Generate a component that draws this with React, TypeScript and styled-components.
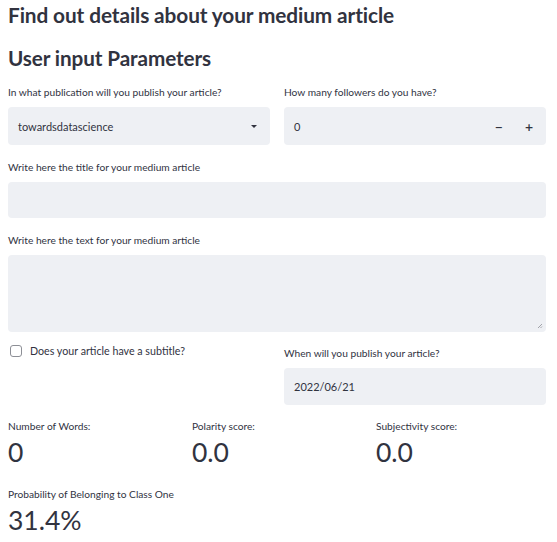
import React from 'react';
import styled, { createGlobalStyle } from 'styled-components';

const GlobalStyle = createGlobalStyle`
  html, body {
    margin: 0;
    padding: 0;
    background: #ffffff;
  }
  body {
    font-family: Lato, "Noto Sans", sans-serif;
    color: #31333f;
  }
`;

const Page = styled.div`
  width: 557px;
  box-sizing: border-box;
  padding: 0 11px 0 8px;
  display: flex;
  flex-direction: column;
`;

const Heading = styled.h2<{ $top: number; $size: number }>`
  margin: ${(p) => p.$top}px 0 0;
  font-size: ${(p) => p.$size}px;
  line-height: 28px;
  font-weight: 700;
  letter-spacing: -0.1px;
  color: #31333f;
`;

const Row = styled.div<{ $top: number }>`
  display: grid;
  grid-template-columns: 1fr 1fr;
  column-gap: 14px;
  margin-top: ${(p) => p.$top}px;
`;

const Field = styled.div<{ $top?: number }>`
  display: flex;
  flex-direction: column;
  margin-top: ${(p) => p.$top ?? 0}px;
  min-width: 0;
`;

const Label = styled.label`
  font-size: 10.2px;
  line-height: 14px;
  color: #31333f;
  margin-bottom: 8px;
`;

const InputBox = styled.div<{ $height?: number }>`
  display: flex;
  align-items: center;
  height: ${(p) => p.$height ?? 38}px;
  box-sizing: border-box;
  padding: 0 10px 0 10px;
  background: #eef0f4;
  border-radius: 4px;
  font-size: 11px;
  color: #31333f;
  position: relative;
`;

const BoxText = styled.span`
  flex: 1;
`;

const Caret = styled.span`
  width: 0;
  height: 0;
  border-left: 3px solid transparent;
  border-right: 3px solid transparent;
  border-top: 3px solid #31333f;
  margin-right: 3px;
`;

const StepButtons = styled.div`
  display: flex;
  align-items: center;
  gap: 22px;
  margin-right: 3px;
  font-size: 14px;
  font-weight: 600;
`;

const Resize = styled.svg`
  position: absolute;
  right: 3px;
  bottom: 3px;
`;

const CheckRow = styled.div`
  display: flex;
  align-items: center;
  gap: 8px;
  margin-top: 4px;
  font-size: 10.7px;
  padding-left: 2px;
`;

const CheckBox = styled.span`
  width: 12px;
  height: 12px;
  box-sizing: border-box;
  border: 1px solid #8d8f96;
  border-radius: 3px;
`;

const Metrics = styled.div<{ $top: number; $cols: number }>`
  display: grid;
  grid-template-columns: repeat(${(p) => p.$cols}, 1fr);
  column-gap: 14px;
  margin-top: ${(p) => p.$top}px;
`;

const Metric = styled.div`
  display: flex;
  flex-direction: column;
`;

const MetricLabel = styled.div`
  font-size: 10.2px;
  line-height: 14px;
`;

const MetricValue = styled.div`
  font-size: 26.5px;
  line-height: 34px;
  margin-top: 2px;
`;

export default function App() {
  return (
    <>
      <GlobalStyle />
      <Page>
        <Heading $top={1} $size={20.8}>Find out details about your medium article</Heading>
        <Heading $top={15} $size={20.7}>User input Parameters</Heading>
        <Row $top={13}>
          <Field>
            <Label>In what publication will you publish your article?</Label>
            <InputBox>
              <BoxText>towardsdatascience</BoxText>
              <Caret />
            </InputBox>
          </Field>
          <Field>
            <Label>How many followers do you have?</Label>
            <InputBox>
              <BoxText>0</BoxText>
              <StepButtons>
                <span>−</span>
                <span>+</span>
              </StepButtons>
            </InputBox>
          </Field>
        </Row>
        <Field $top={15}>
          <Label>Write here the title for your medium article</Label>
          <InputBox $height={36} />
        </Field>
        <Field $top={15}>
          <Label>Write here the text for your medium article</Label>
          <InputBox $height={77}>
            <Resize width="6" height="6" viewBox="0 0 6 6">
              <path d="M1 5 L5 1 M3.5 5 L5 3.5" stroke="#8d8f96" strokeWidth="0.8" />
            </Resize>
          </InputBox>
        </Field>
        <Row $top={8}>
          <Field>
            <CheckRow>
              <CheckBox />
              <span>Does your article have a subtitle?</span>
            </CheckRow>
          </Field>
          <Field $top={6}>
            <Label>When will you publish your article?</Label>
            <InputBox $height={37}>
              <BoxText>2022/06/21</BoxText>
            </InputBox>
          </Field>
        </Row>
        <Metrics $top={14} $cols={3}>
          <Metric>
            <MetricLabel>Number of Words:</MetricLabel>
            <MetricValue>0</MetricValue>
          </Metric>
          <Metric>
            <MetricLabel>Polarity score:</MetricLabel>
            <MetricValue>0.0</MetricValue>
          </Metric>
          <Metric>
            <MetricLabel>Subjectivity score:</MetricLabel>
            <MetricValue>0.0</MetricValue>
          </Metric>
        </Metrics>
        <Metrics $top={18} $cols={1}>
          <Metric>
            <MetricLabel>Probability of Belonging to Class One</MetricLabel>
            <MetricValue>31.4%</MetricValue>
          </Metric>
        </Metrics>
      </Page>
    </>
  );
}
